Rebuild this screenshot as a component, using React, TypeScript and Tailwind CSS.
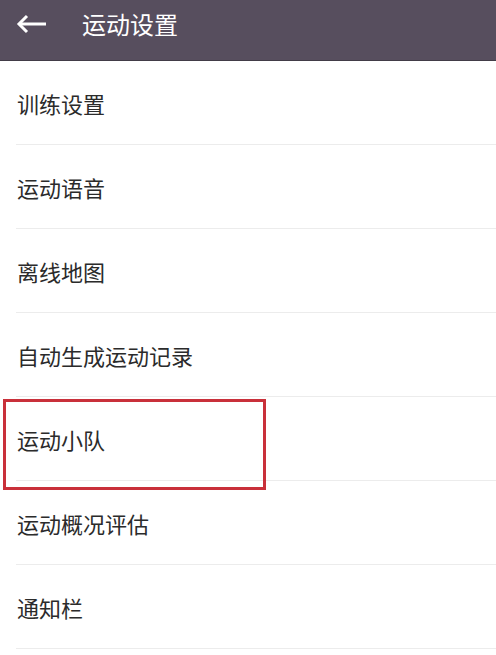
import React from "react";

const items = ["训练设置", "运动语音", "离线地图", "自动生成运动记录", "运动小队", "运动概况评估", "通知栏"];

export default function App() {
  return (
    <div
      className="w-[496px] h-[655px] bg-white overflow-hidden relative"
      style={{ fontFamily: '"Noto Sans CJK SC", "Noto Sans", sans-serif' }}
    >
      <div className="h-[61px] bg-[#574e5e] border-b border-[#423c47] flex items-center pb-[12px]">
        <svg width="30" height="20" viewBox="0 0 30 20" className="ml-[16px]" fill="none" stroke="white" strokeWidth="3" strokeLinecap="butt">
          <path d="M30 10H4" />
          <path d="M11 2L3 10l8 8" />
        </svg>
        <span className="ml-[36px] text-[24px] leading-none text-white">运动设置</span>
      </div>
      <div className="pl-[16px]">
        {items.map((t) => (
          <div key={t} className="h-[84px] border-b border-[#ececec] flex items-center">
            <span className="text-[22px] leading-none text-[#2b2b2b] pl-[1px]">{t}</span>
          </div>
        ))}
      </div>
      <div className="absolute left-[3px] top-[399px] w-[263px] h-[91px] border-[3px] border-[#c9303a]" />
    </div>
  );
}
